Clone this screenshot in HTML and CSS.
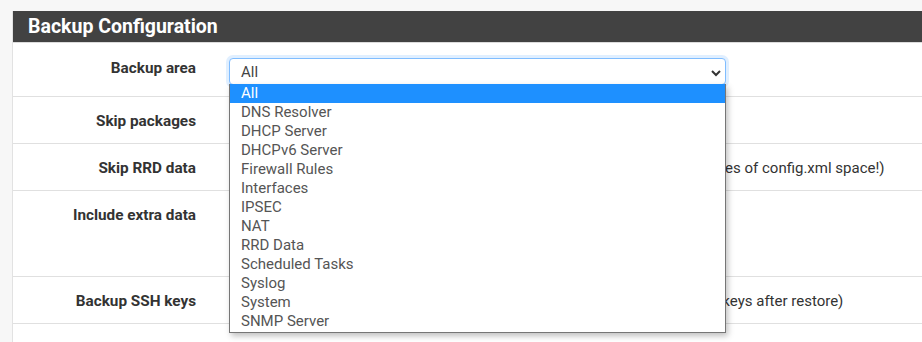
FILE: index.html
```html
<!DOCTYPE html>
<html lang="en">
<head>
    <meta charset="UTF-8">
    <meta name="viewport" content="width=device-width, initial-scale=1.0">
    <title>Backup Configuration</title>
    <link rel="stylesheet" href="styles.css">
</head>
<body>
    <div class="panel">
        <div class="panel-heading">Backup Configuration</div>
        <div class="panel-body">
            <div class="form-row row-area">
                <div class="form-label">Backup area</div>
                <div class="form-field">
                    <div class="select-wrap">
                        <div class="select-box">
                            <span>All</span>
                            <svg class="chevron" width="10" height="8" viewBox="0 0 10 8">
                                <path d="M1 2 L5 6 L9 2" fill="none" stroke="#333" stroke-width="2"/>
                            </svg>
                        </div>
                        <ul class="select-list">
                            <li class="selected">All</li>
                            <li>DNS Resolver</li>
                            <li>DHCP Server</li>
                            <li>DHCPv6 Server</li>
                            <li>Firewall Rules</li>
                            <li>Interfaces</li>
                            <li>IPSEC</li>
                            <li>NAT</li>
                            <li>RRD Data</li>
                            <li>Scheduled Tasks</li>
                            <li>Syslog</li>
                            <li>System</li>
                            <li>SNMP Server</li>
                        </ul>
                    </div>
                </div>
            </div>

            <div class="form-row">
                <div class="form-label">Skip packages</div>
                <div class="form-field">
                    <input type="checkbox" checked aria-label="Do not backup package information">
                </div>
            </div>

            <div class="form-row">
                <div class="form-label">Skip RRD data</div>
                <div class="form-field">
                    <label class="check rrd"><input type="checkbox" checked> Do not backup RRD data (NOTE: RRD Data can consume 4+ megabytes of config.xml space!)</label>
                </div>
            </div>

            <div class="form-row row-extra">
                <div class="form-label">Include extra data</div>
                <div class="form-field">
                    <input type="checkbox" aria-label="Backup extra data">
                </div>
            </div>

            <div class="form-row">
                <div class="form-label">Backup SSH keys</div>
                <div class="form-field">
                    <label class="check ssh"><input type="checkbox"> Backup SSH keys (no need to regenerate keys after restore)</label>
                </div>
            </div>

            <div class="form-row last"></div>
        </div>
    </div>
</body>
</html>
```

FILE: styles.css
```css
* {
    margin: 0;
    padding: 0;
    box-sizing: border-box;
}

body {
    background: #f7f7f7;
    font-family: 'Roboto', 'Liberation Sans', sans-serif;
    font-size: 15px;
    color: #212529;
    overflow: hidden;
    padding: 11px 0 0 12px;
}

.panel {
    width: 960px;
    background: #fff;
    border-left: 1px solid #e2e2e2;
}

.panel-heading {
    height: 32px;
    background: #424242;
    color: #fff;
    font-size: 19.5px;
    font-weight: bold;
    line-height: 31px;
    padding-left: 15px;
    border-bottom: 1px solid #dcdcdc;
}

.form-row {
    display: flex;
    height: 47px;
    border-bottom: 1px solid #e0e0e0;
}

.form-row.row-area {
    height: 54px;
}

.form-row.row-extra {
    height: 86px;
}

.form-row.last {
    border-bottom: none;
}

.form-label {
    width: 183px;
    text-align: right;
    font-weight: bold;
    font-size: 15.3px;
    color: #333;
    line-height: 20px;
    padding-top: 14px;
}

.row-area .form-label {
    padding-top: 15px;
}

.form-field {
    margin-left: 33px;
    padding-top: 14px;
    line-height: 20px;
    color: #333;
}

.row-area .form-field {
    padding-top: 15px;
}

.check input {
    margin-right: 4px;
    vertical-align: -2px;
}

.check.rrd {
    padding-left: 20px;
}

.check.ssh {
    padding-left: 199px;
}

.select-wrap {
    position: relative;
    width: 497px;
}

.select-box {
    display: flex;
    align-items: center;
    justify-content: space-between;
    height: 27px;
    padding: 0 4px 0 11px;
    border: 1px solid #80bdff;
    border-radius: 4px;
    background: #fff;
    box-shadow: 0 0 0 3px rgba(0, 123, 255, 0.12);
    color: #444;
}

.chevron {
    margin-top: 2px;
}

.select-list {
    position: absolute;
    top: 26px;
    left: 0;
    width: 497px;
    list-style: none;
    background: #fff;
    border: 1px solid #767676;
    border-top: none;
    box-shadow: 2px 3px 6px rgba(0, 0, 0, 0.25);
    padding-bottom: 1px;
    z-index: 10;
}

.select-list li {
    height: 19px;
    line-height: 19px;
    padding-left: 11px;
    color: #555;
}

.select-list li.selected {
    background: #1e90ff;
    color: #fff;
}
```
